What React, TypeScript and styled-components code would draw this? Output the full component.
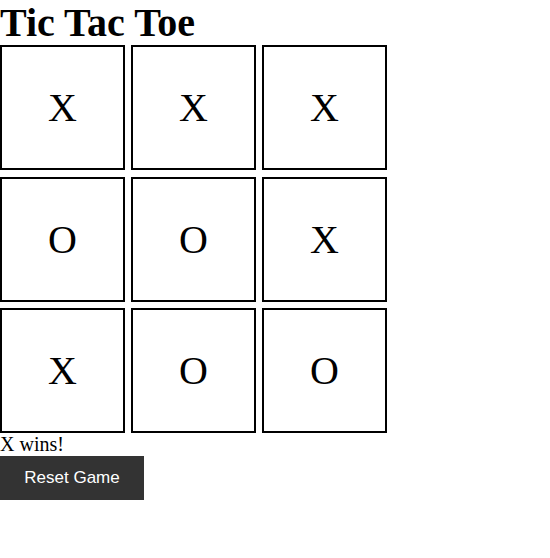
import styled, {createGlobalStyle} from 'styled-components';

const Global = createGlobalStyle`
  body {
    margin: 0;
    background: #fff;
    font-family: "Liberation Serif", "Times New Roman", serif;
    color: #000;
  }
`;

const board = ['X', 'X', 'X', 'O', 'O', 'X', 'X', 'O', 'O'];

const App = () => {
  return (
    <Wrap>
      <Global />
      <Title>Tic Tac Toe</Title>
      <Board>
        {board.map((v, i) => (
          <Cell key={i}>{v}</Cell>
        ))}
      </Board>
      <Status>X wins!</Status>
      <ResetButton>Reset Game</ResetButton>
    </Wrap>
  );
};

const Wrap = styled.div`
  display: flex;
  flex-direction: column;
  align-items: flex-start;
`;

const Title = styled.h1`
  margin: 0;
  font-size: 40px;
  font-weight: bold;
  line-height: 45px;
`;

const Board = styled.div`
  display: grid;
  grid-template-columns: repeat(3, 125px);
  grid-auto-rows: 125px;
  column-gap: 6px;
  row-gap: 6.5px;
`;

const Cell = styled.div`
  box-sizing: border-box;
  border: 2px solid #000;
  background: #fff;
  display: flex;
  align-items: center;
  justify-content: center;
  font-size: 40px;
  font-family: "Liberation Serif", "Times New Roman", serif;
`;

const Status = styled.div`
  font-size: 20px;
  line-height: 23px;
`;

const ResetButton = styled.button`
  width: 144px;
  height: 44px;
  border: none;
  background: #333;
  color: #fff;
  font-family: "Liberation Sans", Arial, sans-serif;
  font-size: 17px;
  padding: 0;
  cursor: pointer;
`;

export default App;
